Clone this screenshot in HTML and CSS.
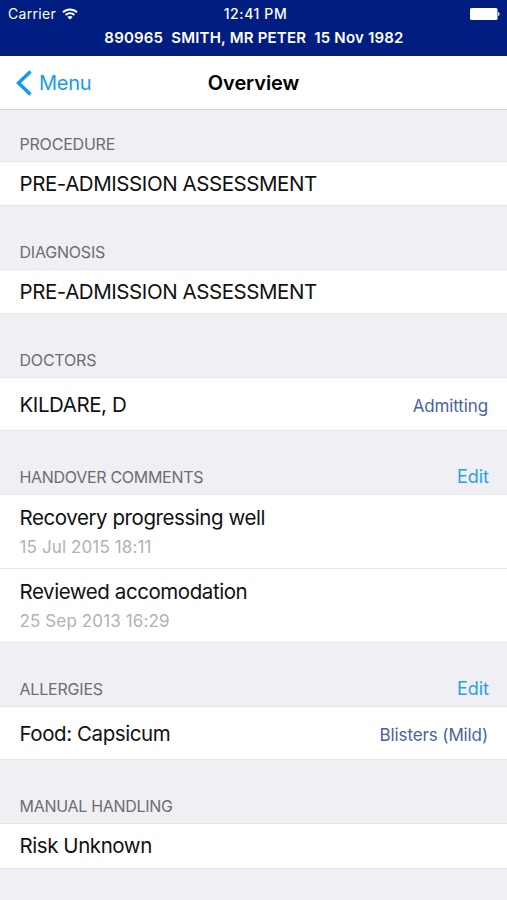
FILE: index.html
```html
<!DOCTYPE html>
<html lang="en">
<head>
<meta charset="utf-8">
<title>Overview</title>
<link rel="stylesheet" href="styles.css">
</head>
<body>
<header class="top">
  <div class="status">
    <div class="carrier"><span>Carrier</span>
      <svg width="16" height="12" viewBox="0 0 16 12" fill="none" stroke="#fff" stroke-width="2"><path d="M1 4.300C5 .4 11 .4 15 4.300M3.600 7c2.500-2.300 6.300-2.300 8.800 0"/><path d="M8 11.500 5.300 8.900c1.500-1.300 3.900-1.300 5.400 0z" fill="#fff" stroke="none"/></svg>
    </div>
    <span class="clock">12:41 PM</span>
    <svg class="battery" width="30" height="12" viewBox="0 0 30 12" fill="#fff"><rect width="27.500" height="12" rx="1.500"/><path d="M28.200 4c1.800.5 1.800 3.500 0 4z"/></svg>
  </div>
  <div class="patient">890965&nbsp; SMITH, MR PETER&nbsp; 15 Nov 1982</div>
</header>
<nav class="nav">
  <a class="back"><svg width="17" height="26" viewBox="0 0 17 26" fill="none" stroke="#0d9af2" stroke-width="3.400"><path d="M14.500 1.500 2.500 13l12 11.500"/></svg><span>Menu</span></a>
  <h1>Overview</h1>
</nav>
<main>
  <h2 class="head h-first"><span>PROCEDURE</span></h2>
  <div class="row"><span>PRE-ADMISSION ASSESSMENT</span></div>
  <h2 class="head"><span>DIAGNOSIS</span></h2>
  <div class="row"><span>PRE-ADMISSION ASSESSMENT</span></div>
  <h2 class="head"><span>DOCTORS</span></h2>
  <div class="row tall"><span>KILDARE, D</span><span class="detail">Admitting</span></div>
  <h2 class="head wide"><span>HANDOVER COMMENTS</span><a class="edit">Edit</a></h2>
  <div class="row note"><span>Recovery progressing well</span><time>15 Jul 2015 18:11</time></div>
  <div class="row note"><span>Reviewed accomodation</span><time>25 Sep 2013 16:29</time></div>
  <h2 class="head"><span>ALLERGIES</span><a class="edit">Edit</a></h2>
  <div class="row tall"><span>Food: Capsicum</span><span class="detail">Blisters (Mild)</span></div>
  <h2 class="head wide"><span>MANUAL HANDLING</span></h2>
  <div class="row last"><span>Risk Unknown</span></div>
</main>
</body>
</html>
```
FILE: styles.css
```css
* { box-sizing: border-box; }
body { margin: 0; height: 900px; overflow: hidden; background: #efeff4; color: #111; font-family: Inter, Roboto, sans-serif; }
.top { height: 56px; background: #001d82; color: #fff; }
.status { height: 28px; padding: 0 7px 1px 8px; display: grid; grid-template-columns: 1fr auto 1fr; align-items: center; font-size: 14px; }
.carrier { display: flex; align-items: center; gap: 6px; letter-spacing: .3px; }
.clock { padding-left: 3px; letter-spacing: .6px; font-weight: 500; font-size: 14px; }
.battery { justify-self: end; }
.patient { height: 20px; padding-left: 1px; line-height: 20px; text-align: center; font-size: 15px; font-weight: 600; letter-spacing: .2px; white-space: nowrap; }
.nav { height: 54px; padding: 0 16px; display: grid; grid-template-columns: 1fr auto 1fr; align-items: center; background: #fff; border-bottom: 1px solid #d4d4d8; }
.back { display: flex; align-items: center; gap: 6px; color: #139df2; font-size: 20px; letter-spacing: -.25px; }
h1 { margin: 0; font-size: 20px; font-weight: 600; letter-spacing: -.1px; color: #000; }
.head { margin: 0; height: 64px; padding: 28px 18px 0 19.5px; display: flex; justify-content: space-between; align-items: center; font-size: 16px; font-weight: 400; letter-spacing: -.2px; color: #6d6d72; }
.wide { letter-spacing: -.3px; }
.h-first { height: 52px; padding-top: 15px; }
.edit { padding-bottom: 2px; font-size: 18px; letter-spacing: 0; color: #2a9fe8; }
.row { height: 44px; padding: 0 19px 2px 19.5px; display: flex; justify-content: space-between; align-items: center; background: #fff; font-size: 20.5px; letter-spacing: -.43px; box-shadow: 0 -1px #e5e5e9, inset 0 -1px #e5e5e9; }
.tall { height: 53px; padding-bottom: 0; }
.last { height: 45px; }
.detail { padding-top: 3px; font-size: 17px; letter-spacing: -.12px; color: #4c639b; }
.note { height: 74px; flex-direction: column; align-items: flex-start; justify-content: center; gap: 7px; padding-bottom: 2px; }
time { font-size: 17px; letter-spacing: .12px; color: #b2b2b2; }
```
